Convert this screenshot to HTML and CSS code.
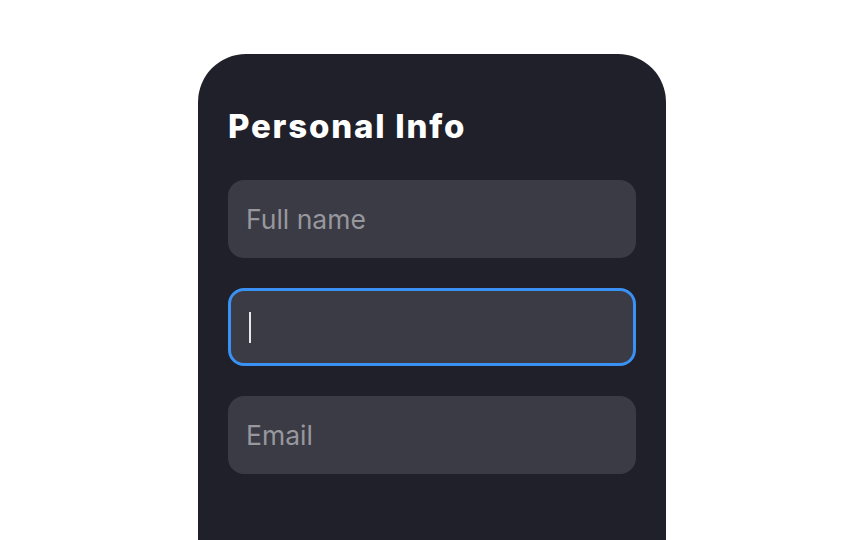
FILE: index.html
```html
<!DOCTYPE html>
<html lang="en">
<head>
<meta charset="utf-8">
<title>Personal Info</title>
<link rel="stylesheet" href="styles.css">
</head>
<body>
<div class="card">
  <h1 class="title">Personal Info</h1>
  <div class="fields">
    <div class="field"><span class="placeholder">Full name</span></div>
    <div class="field field-focus"><span class="caret"></span></div>
    <div class="field"><span class="placeholder">Email</span></div>
  </div>
</div>
</body>
</html>
```
FILE: styles.css
```css
html, body {
  margin: 0;
  padding: 0;
  background: #ffffff;
  height: 540px;
  overflow: hidden;
}
.card {
  box-sizing: border-box;
  width: 468px;
  height: 486px;
  margin: 54px 0 0 198px;
  padding: 52px 30px 0 30px;
  background: #1f2029;
  border-radius: 48px 48px 0 0;
}
.title {
  margin: 0 0 34px 0;
  font-family: Inter, "Noto Sans", sans-serif;
  font-weight: 800;
  font-size: 33px;
  line-height: 40px;
  color: #ffffff;
  letter-spacing: 1.8px;
}
.fields {
  display: flex;
  flex-direction: column;
  gap: 30px;
}
.field {
  box-sizing: border-box;
  height: 78px;
  padding: 0 18px;
  display: flex;
  align-items: center;
  background: #3a3b44;
  border-radius: 16px;
  font-family: Inter, "Noto Sans", sans-serif;
  font-size: 26.5px;
}
.field-focus {
  border: 3px solid #3a91f3;
  padding-left: 18px;
}
.placeholder {
  color: #97979d;
}
.caret {
  display: block;
  width: 2px;
  height: 31px;
  background: #e8e8ec;
}
```
